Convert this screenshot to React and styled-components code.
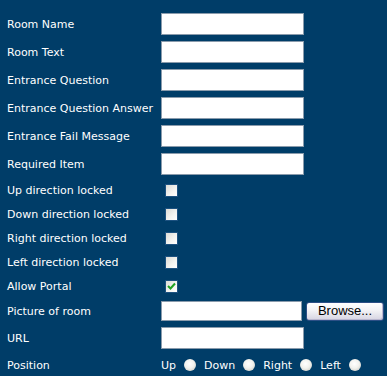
import React from 'react'
import styled, { createGlobalStyle } from 'styled-components'

const GlobalStyle = createGlobalStyle`
  html, body {
    margin: 0;
    padding: 0;
    background: #003d68;
  }
  body {
    font-family: "DejaVu Sans", Verdana, sans-serif;
    font-size: 11px;
    color: #ffffff;
  }
`

const textFields = [
  'Room Name',
  'Room Text',
  'Entrance Question',
  'Entrance Question Answer',
  'Entrance Fail Message',
  'Required Item'
]

const lockFields = [
  { label: 'Up direction locked', checked: false },
  { label: 'Down direction locked', checked: false },
  { label: 'Right direction locked', checked: false },
  { label: 'Left direction locked', checked: false },
  { label: 'Allow Portal', checked: true }
]

const positions = ['Up', 'Down', 'Right', 'Left']

export default function App() {
  return (
    <Form>
      <GlobalStyle />
      {textFields.map(label => (
        <Row key={label} $h={28}>
          <Label>{label}</Label>
          <TextInput type="text" />
        </Row>
      ))}
      {lockFields.map(field => (
        <Row key={field.label} $h={24}>
          <Label>{field.label}</Label>
          <Check checked={field.checked} />
        </Row>
      ))}
      <Row $h={26}>
        <Label>Picture of room</Label>
        <Field>
          <TextInput type="text" $short />
          <BrowseButton type="button">Browse...</BrowseButton>
        </Field>
      </Row>
      <Row $h={28}>
        <Label>URL</Label>
        <TextInput type="text" />
      </Row>
      <Row $h={26}>
        <Label>Position</Label>
        <Field>
          {positions.map(pos => (
            <RadioLabel key={pos}>
              {pos}
              <Radio />
            </RadioLabel>
          ))}
        </Field>
      </Row>
    </Form>
  )
}

function Check({ checked }) {
  return (
    <CheckBox>
      {checked && (
        <svg width="9" height="9" viewBox="0 0 9 9">
          <polyline
            points="1,4 3.5,6.5 8,1.5"
            fill="none"
            stroke="#21a121"
            strokeWidth="2"
          />
        </svg>
      )}
    </CheckBox>
  )
}

const Form = styled.div`
  display: flex;
  flex-direction: column;
  padding: 10px 0 0 7px;
`

const Row = styled.div`
  display: grid;
  grid-template-columns: 154px 1fr;
  align-items: center;
  height: ${p => p.$h}px;
`

const Label = styled.span`
  white-space: nowrap;
  line-height: 13px;
`

const Field = styled.div`
  display: flex;
  align-items: center;
`

const TextInput = styled.input`
  box-sizing: border-box;
  width: ${p => (p.$short ? 141 : 143)}px;
  height: ${p => (p.$short ? 20 : 22)}px;
  margin: 0;
  padding: 1px 3px;
  border: 1px solid #8a9bac;
  background: #ffffff;
  font-family: "DejaVu Sans", Verdana, sans-serif;
  font-size: 11px;
  outline: none;
`

const BrowseButton = styled.button`
  box-sizing: border-box;
  width: 78px;
  height: 19px;
  margin: 1px 0 0 4px;
  padding: 0 0 1px;
  border: 1px solid #2c4f86;
  border-radius: 3px;
  background: linear-gradient(#ffffff 0%, #f2f2f5 45%, #d6d4e2 100%);
  box-shadow: inset -1px -1px 0 #b9b7cf;
  font-family: "Liberation Sans", Arial, sans-serif;
  font-size: 13px;
  color: #000000;
  line-height: 16px;
`

const CheckBox = styled.span`
  box-sizing: border-box;
  display: flex;
  align-items: center;
  justify-content: center;
  width: 13px;
  height: 13px;
  margin-left: 4px;
  border: 1px solid #1c5180;
  background: linear-gradient(135deg, #dcdcd6 0%, #f4f4f1 60%, #ffffff 100%);
`

const RadioLabel = styled.span`
  display: flex;
  align-items: center;
  line-height: 13px;
`

const Radio = styled.span`
  display: block;
  width: 12px;
  height: 12px;
  margin: 0 8px 0 8px;
  border-radius: 50%;
  background: radial-gradient(circle at 45% 40%, #ffffff 0%, #f2f2ee 45%, #cfcfc8 85%, #8e9ba8 100%);
`
